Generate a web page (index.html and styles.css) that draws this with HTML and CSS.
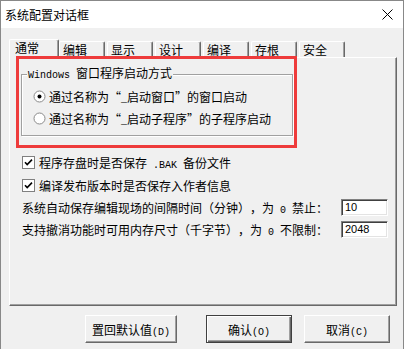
FILE: index.html
```html
<!DOCTYPE html>
<html lang="zh-CN">
<head>
  <meta charset="UTF-8">
  <meta name="viewport" content="width=device-width, initial-scale=1.0">
  <title>系统配置对话框</title>
  <link rel="stylesheet" href="styles.css">
</head>
<body>
  <div class="window">
    <div class="titlebar">
      <span class="title">系统配置对话框</span>
      <svg class="close" width="11" height="11" viewBox="0 0 11 11">
        <path d="M0.5 0.5 L10.5 10.5 M10.5 0.5 L0.5 10.5" stroke="#000" stroke-width="1" fill="none"/>
      </svg>
    </div>

    <div class="content">
      <div class="tabs">
        <div class="tab active">通常</div>
        <div class="tab">编辑</div>
        <div class="tab">显示</div>
        <div class="tab">设计</div>
        <div class="tab">编译</div>
        <div class="tab">存根</div>
        <div class="tab">安全</div>
      </div>

      <div class="panel">
        <fieldset class="group">
          <legend><span class="en">Windows </span>窗口程序启动方式</legend>
          <div class="opt">
            <svg class="radio" width="13" height="13" viewBox="0 0 13 13">
              <circle cx="6.5" cy="6.5" r="5.5" fill="#fff" stroke="#8a8a8a"/>
              <circle cx="6.5" cy="6.5" r="2" fill="#000"/>
            </svg>
            <span>通过名称为<span class="q ql">“</span><span class="en">_</span>启动窗口<span class="q qr">”</span>的窗口启动</span>
          </div>
          <div class="opt">
            <svg class="radio" width="13" height="13" viewBox="0 0 13 13">
              <circle cx="6.5" cy="6.5" r="5.5" fill="#fff" stroke="#8a8a8a"/>
            </svg>
            <span>通过名称为<span class="q ql">“</span><span class="en">_</span>启动子程序<span class="q qr">”</span>的子程序启动</span>
          </div>
        </fieldset>

        <div class="check first">
          <svg class="box" width="13" height="13" viewBox="0 0 13 13">
            <rect x="0.5" y="0.5" width="12" height="12" fill="#fff" stroke="#808080"/>
            <path d="M3 6.2 L5.2 8.6 L10 3.6" stroke="#000" stroke-width="1.6" fill="none"/>
          </svg>
          <span>程序存盘时是否保存<span class="en"> .BAK </span>备份文件</span>
        </div>
        <div class="check">
          <svg class="box" width="13" height="13" viewBox="0 0 13 13">
            <rect x="0.5" y="0.5" width="12" height="12" fill="#fff" stroke="#808080"/>
            <path d="M3 6.2 L5.2 8.6 L10 3.6" stroke="#000" stroke-width="1.6" fill="none"/>
          </svg>
          <span>编译发布版本时是否保存入作者信息</span>
        </div>

        <div class="field first">
          <span>系统自动保存编辑现场的间隔时间（分钟），为<span class="en"> 0 </span>禁止：</span>
          <input class="num" type="text" value="10">
        </div>
        <div class="field">
          <span>支持撤消功能时可用内存尺寸（千字节），为<span class="en"> 0 </span>不限制：</span>
          <input class="num" type="text" value="2048">
        </div>
      </div>

      <div class="buttons">
        <button class="btn wide">置回默认值<span class="en">(D)</span></button>
        <button class="btn default">确认<span class="en">(O)</span></button>
        <button class="btn cancel">取消<span class="en">(C)</span></button>
      </div>

      <div class="mark"></div>
    </div>
  </div>
</body>
</html>
```

FILE: styles.css
```css
* {
  margin: 0;
  padding: 0;
  box-sizing: border-box;
}

body {
  background: #fff;
  font-family: "Noto Sans CJK SC", sans-serif;
  font-size: 12px;
  color: #000;
  overflow: hidden;
  text-spacing-trim: space-all;
}

.en {
  font-family: "Liberation Mono", monospace;
  font-size: 10px;
}

.window {
  width: 404px;
  height: 349px;
  border: 1px solid #888;
  border-bottom: none;
  background: #f0f0f0;
  display: flex;
  flex-direction: column;
}

.titlebar {
  height: 27px;
  background: #fff;
  display: flex;
  align-items: center;
  justify-content: space-between;
  padding: 0 10px 0 4px;
}

.content {
  flex: 1;
  position: relative;
  padding: 11px 0 0 8px;
}

/* tabs */
.tabs {
  display: flex;
  align-items: flex-end;
  gap: 2px;
  height: 18px;
  position: relative;
  z-index: 1;
}

.tab {
  width: 46px;
  height: 16px;
  border: 1px solid #fff;
  border-bottom: none;
  border-right-color: #696969;
  border-radius: 2px 2px 0 0;
  box-shadow: inset -1px 0 #a0a0a0;
  background: #f0f0f0;
  padding-left: 3px;
  line-height: 15px;
}

.tab.active {
  width: 50px;
  height: 19px;
  margin-right: -2px;
  margin-bottom: -1px;
  padding-left: 5px;
  line-height: 15px;
}

.panel {
  width: 388px;
  height: 249px;
  border: 1px solid;
  border-color: #fff #696969 #696969 #fff;
  box-shadow: inset -1px -1px #a0a0a0;
}

/* group box */
.group {
  width: 272px;
  margin: 7px 0 0 11px;
  padding: 2px 0 6px 0;
  border: 1px solid #a0a0a0;
  box-shadow: inset 1px 1px #fff, 1px 1px #fff;
}

.group legend {
  margin-left: 5px;
  padding: 0 1px;
  line-height: 15px;
  background: #f0f0f0;
}

.opt {
  display: flex;
  align-items: center;
  height: 22px;
  padding-left: 11px;
}

.radio {
  margin-right: 3px;
}

.q {
  display: inline-block;
  width: 12px;
}

.ql {
  text-align: right;
}

.qr {
  text-align: left;
}

/* checkboxes */
.check {
  display: flex;
  align-items: center;
  height: 23px;
  padding-left: 12px;
}

.check.first {
  margin-top: 15px;
}

.box {
  margin-right: 4px;
}

/* number fields */
.field {
  display: flex;
  align-items: center;
  justify-content: space-between;
  height: 22px;
  padding: 0 8px 0 12px;
}

.field.first {
  margin-top: -1px;
}

.num {
  width: 47px;
  height: 17px;
  border: 1px solid;
  border-color: #808080 #fff #fff #808080;
  box-shadow: inset 1px 1px #404040, inset -1px -1px #e3e3e3;
  background: #fff;
  padding-left: 3px;
  font-family: "Liberation Sans", sans-serif;
  font-size: 11px;
  outline: none;
}

/* buttons */
.buttons {
  display: flex;
  margin-top: 9px;
  padding-left: 76px;
}

.btn {
  height: 28px;
  width: 86px;
  border: 1px solid;
  border-color: #fff #696969 #696969 #fff;
  box-shadow: inset -1px -1px #a0a0a0;
  background: #f0f0f0;
  font-family: "Noto Sans CJK SC", sans-serif;
  font-size: 12px;
  color: #000;
}

.btn.wide {
  width: 92px;
}

.btn.default {
  margin-left: 29px;
  border-color: #404040;
  box-shadow: inset 1px 1px #fff, inset -1px -1px #696969, inset -2px -2px #a0a0a0;
}

.btn.cancel {
  margin-left: 12px;
}

/* red annotation frame */
.mark {
  position: absolute;
  left: 15px;
  top: 28px;
  width: 281px;
  height: 92px;
  border: 3px solid #ee3b3b;
  z-index: 2;
}
```
